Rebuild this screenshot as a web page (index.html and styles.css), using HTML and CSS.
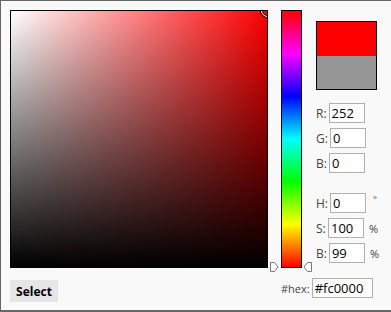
FILE: index.html
```html
<!DOCTYPE html>
<html>
<head>
<meta charset="utf-8">
<link rel="stylesheet" href="styles.css">
</head>
<body>
<div class="panel">
  <div class="sv">
    <div class="sv-white"></div>
    <div class="sv-black"></div>
    <div class="sv-marker"></div>
  </div>
  <div class="hue-wrap">
    <div class="hue"></div>
    <svg class="arrow arrow-left" width="9" height="10" viewBox="0 0 9 10"><path d="M0.5,0.5 H4.5 L8,5 L4.5,9.5 H0.5 Z" fill="#fff" stroke="#777"/></svg>
    <svg class="arrow arrow-right" width="9" height="10" viewBox="0 0 9 10"><path d="M8.5,0.5 H4.5 L1,5 L4.5,9.5 H8.5 Z" fill="#fff" stroke="#777"/></svg>
  </div>
  <div class="side">
    <div class="swatch">
      <div class="swatch-new"></div>
      <div class="swatch-old"></div>
    </div>
    <div class="fields">
      <div class="row"><span class="lbl">R:</span><input class="num" value="252"></div>
      <div class="row"><span class="lbl">G:</span><input class="num" value="0"></div>
      <div class="row"><span class="lbl">B:</span><input class="num" value="0"></div>
    </div>
    <div class="fields fields-hsb">
      <div class="row"><span class="lbl">H:</span><input class="num" value="0"><span class="unit deg">°</span></div>
      <div class="row"><span class="lbl">S:</span><input class="num" value="100"><span class="unit">%</span></div>
      <div class="row"><span class="lbl">B:</span><input class="num" value="99"><span class="unit">%</span></div>
    </div>
  </div>
  <button class="select">Select</button>
  <div class="hex">
    <span class="hex-lbl">#hex:</span><input class="hex-input" value="#fc0000">
  </div>
</div>
</body>
</html>
```

FILE: styles.css
```css
html, body {
  margin: 0;
  padding: 0;
  background: #fff;
}
body {
  font-family: "Open Sans", "DejaVu Sans", sans-serif;
  overflow: hidden;
}
.panel {
  box-sizing: border-box;
  width: 391px;
  height: 312px;
  border: 1px solid #666;
  border-right: none;
  border-bottom-width: 2px;
  background: #f9f9f9;
  padding: 9px 0 0 9px;
  display: grid;
  grid-template-columns: 258px 21px 70px;
  grid-template-rows: 258px auto;
  column-gap: 13px;
  row-gap: 10px;
  align-items: start;
}
.sv {
  position: relative;
  width: 256px;
  height: 256px;
  border: 1px solid #000;
  background: #ff0000;
  overflow: hidden;
}
.sv-white, .sv-black {
  position: absolute;
  inset: 0;
}
.sv-white {
  background: linear-gradient(to right, #fff, rgba(255,255,255,0));
}
.sv-black {
  background: linear-gradient(to bottom, rgba(0,0,0,0), #000);
}
.sv-marker {
  position: absolute;
  left: 250px;
  top: -7px;
  width: 11px;
  height: 11px;
  border: 1.5px solid #fff;
  border-radius: 50%;
  box-shadow: 0 0 0 1px #000, inset 0 0 0 1px #000;
}
.hue-wrap {
  position: relative;
  width: 21px;
  height: 258px;
}
.hue {
  box-sizing: border-box;
  width: 21px;
  height: 258px;
  border: 1px solid #000;
  background: linear-gradient(to bottom, #f00 0%, #f0f 16.67%, #00f 33.33%, #0ff 50%, #0f0 66.67%, #ff0 83.33%, #f00 100%);
}
.arrow {
  position: absolute;
  top: 252px;
  display: block;
}
.arrow-left { left: -11px; }
.arrow-right { left: 22px; }
.side {
  margin-left: 1px;
  padding-top: 11px;
}
.swatch {
  width: 59px;
  border: 1px solid #000;
}
.swatch-new {
  height: 34px;
  background: #ff0000;
}
.swatch-old {
  height: 33px;
  background: #969696;
}
.fields {
  margin-top: 13px;
  display: flex;
  flex-direction: column;
  gap: 5px;
}
.fields-hsb {
  margin-top: 20px;
}
.row {
  display: flex;
  align-items: center;
  gap: 2px;
  height: 20px;
}
.lbl {
  font-size: 12px;
  color: #444;
  min-width: 10px;
}
.num, .hex-input {
  box-sizing: border-box;
  height: 20px;
  border: 1px solid #b0b0b0;
  background: #fff;
  font-family: "Open Sans", "DejaVu Sans", sans-serif;
  font-size: 13px;
  color: #000;
  padding: 0 2px;
  margin: 0;
  outline: none;
}
.num { width: 36px; }
.unit {
  font-size: 11px;
  color: #444;
  margin-left: 3px;
}
.deg {
  align-self: flex-start;
  font-size: 9px;
  margin-left: 5px;
}
.select {
  grid-column: 1;
  justify-self: start;
  margin: 2px 0 0 0;
  width: 48px;
  height: 22px;
  border: none;
  background: #e6e6e6;
  font-family: "Open Sans", "DejaVu Sans", sans-serif;
  font-weight: bold;
  font-size: 12px;
  color: #000;
  padding: 0;
}
.hex {
  grid-column: 2 / 4;
  display: flex;
  align-items: center;
  gap: 2px;
}
.hex-lbl {
  font-size: 11px;
  color: #444;
}
.hex-input {
  width: 61px;
}
```
